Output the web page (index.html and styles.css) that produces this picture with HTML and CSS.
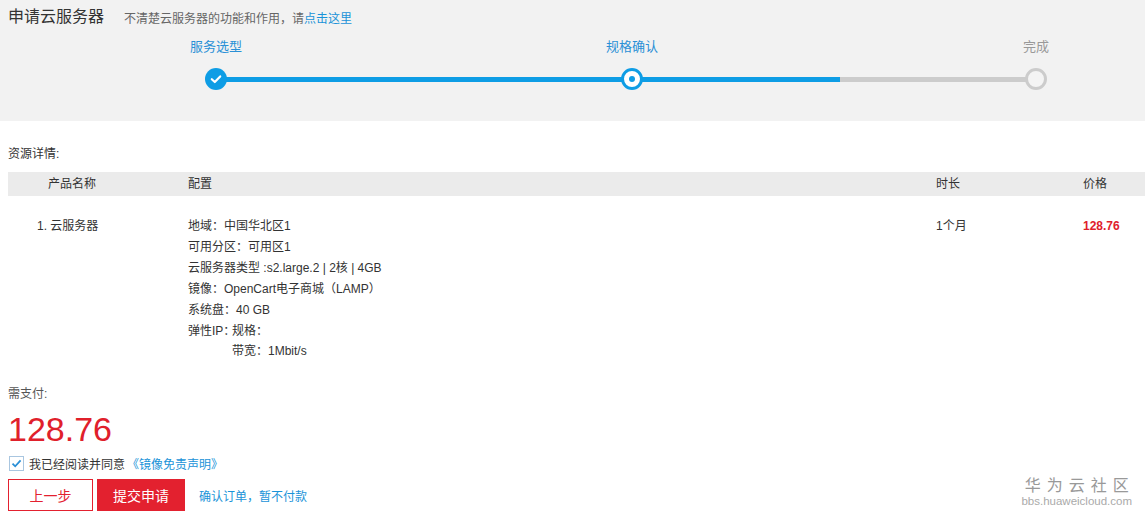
FILE: index.html
```html
<!DOCTYPE html>
<html lang="zh-CN">
<head>
  <meta charset="UTF-8">
  <title>申请云服务器</title>
  <link rel="stylesheet" href="styles.css">
</head>
<body>
  <div class="header">
    <div class="title-row">
      <h1 class="title">申请云服务器</h1>
      <span class="subtitle">不清楚云服务器的功能和作用，请<a class="link" href="#">点击这里</a></span>
    </div>
    <div class="steps">
      <div class="step-labels">
        <span class="label done">服务选型</span>
        <span></span>
        <span class="label done">规格确认</span>
        <span></span>
        <span class="label">完成</span>
      </div>
      <div class="step-track">
        <div class="node"><span class="dot dot-done">
          <svg width="22" height="22" viewBox="0 0 22 22"><path d="M6.8 11.2 L9.8 14 L15.2 8.4" fill="none" stroke="#fff" stroke-width="2.2" stroke-linecap="round" stroke-linejoin="round"/></svg>
        </span></div>
        <div></div>
        <div class="node"><span class="dot dot-current"></span></div>
        <div></div>
        <div class="node"><span class="dot dot-todo"></span></div>
      </div>
    </div>
  </div>

  <div class="content">
    <div class="section-title">资源详情:</div>
    <div class="table">
      <div class="table-head">
        <div class="col-name">产品名称</div>
        <div>配置</div>
        <div>时长</div>
        <div>价格</div>
      </div>
      <div class="table-row">
        <div class="col-name">1. 云服务器</div>
        <div class="config">
          <div>地域：中国华北区1</div>
          <div>可用分区：可用区1</div>
          <div>云服务器类型 :s2.large.2 | 2核 | 4GB</div>
          <div>镜像：OpenCart电子商城（LAMP）</div>
          <div>系统盘：40 GB</div>
          <div class="config-ip">
            <span class="ip-label">弹性IP：</span>
            <div>
              <div>规格：</div>
              <div class="ip-sub">带宽：1Mbit/s</div>
            </div>
          </div>
        </div>
        <div>1个月</div>
        <div class="price">128.76</div>
      </div>
    </div>

    <div class="pay">
      <div class="pay-label">需支付:</div>
      <div class="pay-amount">128.76</div>
      <label class="agree">
        <svg class="check" width="15" height="15" viewBox="0 0 15 15"><rect x="0.5" y="0.5" width="14" height="14" fill="#fff" stroke="#a9c6e0"/><path d="M3.5 7.6 L6.2 10.3 L11.6 4.4" fill="none" stroke="#2a8fd6" stroke-width="1.8"/></svg>
        <span>我已经阅读并同意</span><a class="link" href="#">《镜像免责声明》</a>
      </label>
      <div class="actions">
        <button class="btn btn-back">上一步</button>
        <button class="btn btn-submit">提交申请</button>
        <a class="link link-later" href="#">确认订单，暂不付款</a>
      </div>
    </div>
  </div>

  <div class="watermark">
    <div class="wm-name">华为云社区</div>
    <div class="wm-url">bbs.huaweicloud.com</div>
  </div>
</body>
</html>
```

FILE: styles.css
```css
body {
  margin: 0;
  font-family: "Liberation Sans", "Noto Sans CJK SC", sans-serif;
  font-size: 12px;
  color: #333;
  background: #fff;
  position: relative;
  min-height: 517px;
}

.link {
  color: #1a93d8;
  text-decoration: none;
}

.header {
  background: #f2f2f2;
  height: 121px;
  padding: 7px 0 0 8px;
  box-sizing: border-box;
}

.title-row {
  display: flex;
  align-items: center;
  gap: 20px;
  height: 20px;
}

.title {
  margin: 0;
  font-size: 16px;
  font-weight: normal;
  line-height: 20px;
  color: #333;
}

.subtitle {
  font-size: 12px;
  color: #666;
}

.steps {
  margin-left: 168px;
  width: 900px;
}

.step-labels,
.step-track {
  display: grid;
  grid-template-columns: 80px 336px 80px 324px 80px;
}

.step-labels {
  margin-top: 12px;
  line-height: 16px;
  font-size: 13px;
}

.label {
  text-align: center;
  color: #999;
}

.label.done {
  color: #2a90d6;
}

.step-track {
  margin-top: 13px;
  height: 22px;
  background:
    linear-gradient(#0e9de5, #0e9de5) 40px 50% / 624px 5px no-repeat,
    linear-gradient(#cccccc, #cccccc) 40px 50% / 820px 5px no-repeat;
}

.node {
  display: flex;
  justify-content: center;
}

.dot {
  width: 22px;
  height: 22px;
  border-radius: 50%;
  box-sizing: border-box;
  display: flex;
  align-items: center;
  justify-content: center;
}

.dot-done {
  background: #0e9de5;
}

.dot-current {
  background: #fff;
  border: 3px solid #0e9de5;
}

.dot-current::after {
  content: "";
  width: 6px;
  height: 6px;
  border-radius: 50%;
  background: #0e9de5;
}

.dot-todo {
  background: #f4f4f4;
  border: 3px solid #cccccc;
}

.content {
  padding-left: 8px;
}

.section-title {
  margin-top: 24px;
  line-height: 18px;
  font-size: 12px;
}

.table {
  margin-top: 9px;
}

.table-head,
.table-row {
  display: grid;
  grid-template-columns: 180px 748px 147px 1fr;
}

.table-head {
  background: #ebebeb;
  height: 24px;
  line-height: 24px;
}

.table-head .col-name {
  padding-left: 40px;
}

.table-row {
  padding-top: 20px;
  line-height: 21px;
}

.table-row .col-name {
  padding-left: 29px;
}

.config-ip {
  display: flex;
}

.ip-label {
  flex-shrink: 0;
  width: 44px;
  white-space: nowrap;
}

.ip-sub {
  line-height: 18px;
}

.price {
  color: #e0202b;
  font-weight: bold;
}

.pay {
  margin-top: 25px;
}

.pay-label {
  line-height: 18px;
  color: #555;
}

.pay-amount {
  margin-top: 4px;
  font-size: 34px;
  line-height: 44px;
  color: #e0202b;
}

.agree {
  margin-top: 4px;
  display: flex;
  align-items: center;
  height: 16px;
  padding-left: 1px;
  gap: 5px;
}

.agree .link {
  margin-left: -3px;
}

.actions {
  margin-top: 8px;
  display: flex;
  align-items: center;
  gap: 4px;
}

.btn {
  height: 32px;
  border: 1px solid #e3212f;
  font-family: inherit;
  font-size: 14px;
  padding: 0;
  cursor: pointer;
}

.btn-back {
  width: 85px;
  background: #fff;
  color: #e3212f;
}

.btn-submit {
  width: 88px;
  background: #e3212f;
  color: #fff;
}

.link-later {
  margin-left: 10px;
}

.watermark {
  position: absolute;
  right: 13px;
  bottom: 9px;
  color: #999;
  text-align: center;
}

.wm-name {
  font-size: 16px;
  letter-spacing: 6px;
  line-height: 16px;
  margin-right: -6px;
}

.wm-url {
  font-size: 11.5px;
  line-height: 14px;
  color: #aaa;
}
```
